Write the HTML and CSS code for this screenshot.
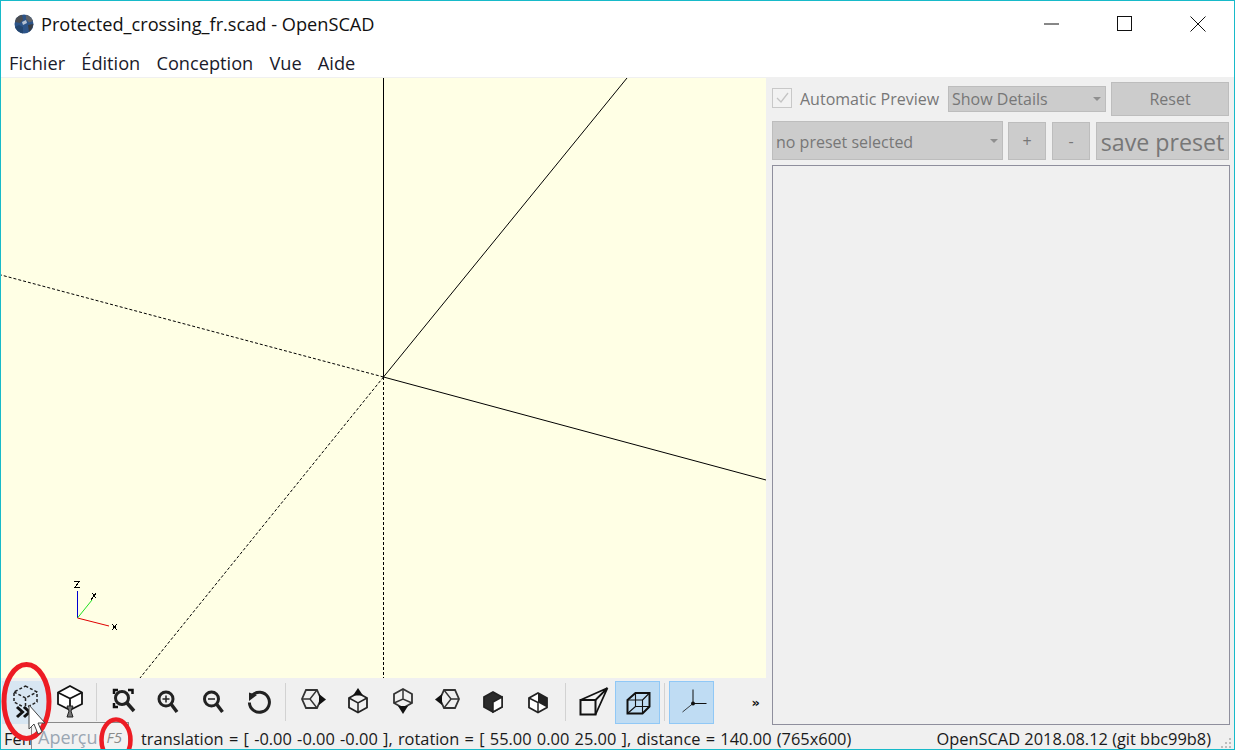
FILE: index.html
```html
<!DOCTYPE html>
<html lang="fr">
<head>
<meta charset="utf-8">
<title>Protected_crossing_fr.scad - OpenSCAD</title>
<link rel="stylesheet" href="styles.css">
</head>
<body>
<div class="window">
  <header class="titlebar">
    <svg class="app-icon" width="20" height="20" viewBox="0 0 20 20">
      <circle cx="10" cy="10" r="9.500" fill="#2d5488"/>
      <path d="M2 4.500 Q5 1 8 .8 L9 6 L6 9 L1 8Z" fill="#4a4d52"/>
      <path d="M12 .8 Q17 2 19 7 L15 8.500 L12 5Z" fill="#5e6268"/>
      <path d="M14 11 L19.500 10 Q18.500 15 15 18Z" fill="#3a3d42"/>
      <path d="M1 13 L5 11 L9 13 L9 19.500 Q3 18 1 13Z" fill="#24466f"/>
      <path d="M8 8 L12 6 L13 9 L9 11Z" fill="#b7c2d2"/>
    </svg>
    <span class="title-text">Protected_crossing_fr.scad - OpenSCAD</span>
    <div class="window-controls">
      <svg class="win-btn" width="16" height="16" viewBox="0 0 16 16"><path d="M0 8H15" stroke="#111" fill="none"/></svg>
      <svg class="win-btn" width="16" height="16" viewBox="0 0 16 16"><rect x="0.500" y="0.500" width="14" height="14" stroke="#111" fill="none"/></svg>
      <svg class="win-btn" width="16" height="16" viewBox="0 0 16 16"><path d="M0.500 0.500L15.500 15.500M15.500 0.500L0.500 15.500" stroke="#111" fill="none"/></svg>
    </div>
  </header>
  <nav class="menubar">
    <span class="menu-item">Fichier</span>
    <span class="menu-item">Édition</span>
    <span class="menu-item">Conception</span>
    <span class="menu-item">Vue</span>
    <span class="menu-item">Aide</span>
  </nav>
  <main class="workspace">
    <section class="left-pane">
      <svg class="viewport" width="765" height="600" viewBox="0 0 765 600">
        <g stroke="#000" stroke-width="1" fill="none">
          <path d="M382.500 0V299"/>
          <path d="M382.500 299L626 0"/>
          <path d="M382.500 299L765 402"/>
          <path d="M382.500 299V600" stroke-dasharray="3 2"/>
          <path d="M382.500 299L139 600" stroke-dasharray="3 2"/>
          <path d="M382.500 299L0 197" stroke-dasharray="3 2"/>
        </g>
        <path d="M76.500 540V513" stroke="#0000d0" fill="none"/>
        <path d="M76.500 540L91 522" stroke="#20e020" fill="none"/>
        <path d="M76.500 540L108 548" stroke="#e00000" fill="none"/>
        <g stroke="#000" fill="none" shape-rendering="crispEdges">
          <path d="M73 503.500H79M78 504L74 509M73 509.500H79"/>
          <path d="M91 515L95 520M95 515L90 522"/>
          <path d="M111 546L116 552M116 546L111 552"/>
        </g>
      </svg>
      <div class="toolbar">
        <button class="tool hover">
          <svg width="36" height="44" viewBox="0 0 36 44"><path d="M18.500 6L30 12V22L18.500 28L7 22V12Z" fill="none" stroke="#222" stroke-width="1.500" stroke-dasharray="3 2"/><path d="M7 12L18.500 18L30 12M18.500 18V28" fill="none" stroke="#222" stroke-width="1.500" stroke-dasharray="3 2"/><path d="M10 27L15.500 32L10 37M17 27L22.500 32L17 37" fill="none" stroke="#111" stroke-width="3"/></svg>
        </button>
        <button class="tool">
          <svg width="36" height="44" viewBox="0 0 36 44"><path d="M18 6L30 12.500V24L18 30L6 24V12.500Z" fill="#fff" stroke="#111" stroke-width="1.800"/><path d="M6 12.500L18 18.500L30 12.500M18 18.500V30" fill="none" stroke="#111" stroke-width="1.800"/><path d="M15 26H21L19 31L21 37H15L17 31Z" fill="#777" stroke="#222"/></svg>
        </button>
        <span class="sep sep-a"></span>
        <button class="tool wide">
          <svg width="36" height="44" viewBox="0 0 36 44"><path d="M9 14V10H13M23 10H27.500V14M9 23V27H13" fill="none" stroke="#111" stroke-width="2.500"/><circle cx="17" cy="18" r="6.500" fill="none" stroke="#222" stroke-width="3"/><path d="M22 23L29 31" stroke="#222" stroke-width="3.500"/></svg>
        </button>
        <button class="tool wide">
          <svg width="36" height="44" viewBox="0 0 36 44"><circle cx="16" cy="19" r="7" fill="none" stroke="#222" stroke-width="3"/><path d="M12.500 19H19.500M16 15.500V22.500" stroke="#222" stroke-width="1.500"/><path d="M21 24L27 32" stroke="#222" stroke-width="3.500"/></svg>
        </button>
        <button class="tool wide">
          <svg width="36" height="44" viewBox="0 0 36 44"><circle cx="16.500" cy="19" r="7" fill="none" stroke="#222" stroke-width="3"/><path d="M13 19H20" stroke="#222" stroke-width="1.500"/><path d="M21.500 24L27.500 32" stroke="#222" stroke-width="3.500"/></svg>
        </button>
        <button class="tool wide">
          <svg width="36" height="44" viewBox="0 0 36 44"><path d="M11 15.500A10 10 0 1 1 8.400 22.500" fill="none" stroke="#222" stroke-width="3"/><path d="M8 12.500L16 15L8 21Z" fill="#222"/></svg>
        </button>
        <span class="sep sep-b"></span>
        <button class="tool">
          <svg width="36" height="44" viewBox="0 0 36 44"><path d="M11 10H22L26 19L22 28H11L7 19Z" fill="none" stroke="#333" stroke-width="1.800"/><path d="M7 19H15L22 10M15 19L22 28" fill="none" stroke="#333" stroke-width="1.400"/><path d="M24 14L31 19.500L24 25Z" fill="#111"/></svg>
        </button>
        <button class="tool">
          <svg width="36" height="44" viewBox="0 0 36 44"><path d="M18 13L27 18V27.500L18 32.500L9 27.500V18Z" fill="none" stroke="#222" stroke-width="1.800"/><path d="M9 18L18 23L27 18M18 23V32.500" fill="none" stroke="#222" stroke-width="1.500"/><path d="M13 15.500L18 8L23 15.500Z" fill="#111"/></svg>
        </button>
        <button class="tool">
          <svg width="36" height="44" viewBox="0 0 36 44"><path d="M18 9L27 14V23L18 28L9 23V14Z" fill="none" stroke="#333" stroke-width="1.800"/><path d="M18 9V19M9 23L18 19L27 23" fill="none" stroke="#333" stroke-width="1.500"/><path d="M13 26L23 26L18 34Z" fill="#111"/></svg>
        </button>
        <button class="tool">
          <svg width="36" height="44" viewBox="0 0 36 44"><path d="M14 10H25L29 19L25 28H14L10 19Z" fill="none" stroke="#333" stroke-width="1.800"/><path d="M29 19H21L14 10M21 19L14 28" fill="none" stroke="#333" stroke-width="1.400"/><path d="M12 14L5 19.500L12 25Z" fill="#111"/></svg>
        </button>
        <button class="tool">
          <svg width="36" height="44" viewBox="0 0 36 44"><path d="M18 12L27 17V27L18 32L9 27V17Z" fill="#2b2b2b" stroke="#222" stroke-width="1.800"/><path d="M18 22L27 17V27L18 32Z" fill="#fff" stroke="#222" stroke-width="1.500"/></svg>
        </button>
        <button class="tool">
          <svg width="36" height="44" viewBox="0 0 36 44"><path d="M18 13L27 18V27.500L18 32.500L9 27.500V18Z" fill="#fff" stroke="#222" stroke-width="1.800"/><path d="M18 13L27 18V27.500L18 22.500Z" fill="#222"/><path d="M9 18L18 22.500V32.500" fill="none" stroke="#222" stroke-width="1.500"/></svg>
        </button>
        <span class="sep sep-a"></span>
        <button class="tool">
          <svg width="36" height="44" viewBox="0 0 36 44"><rect x="5.500" y="20" width="15" height="14.500" fill="none" stroke="#111" stroke-width="2"/><path d="M5.500 20L32.500 8L20.500 20M32.500 8L20.500 34.500" fill="none" stroke="#111" stroke-width="1.800"/></svg>
        </button>
        <button class="tool active">
          <svg width="36" height="44" viewBox="0 0 36 44"><path d="M7.500 20L15.500 13H29.500V26.500L22.500 33.500H7.500Z" fill="none" stroke="#111" stroke-width="2"/><path d="M7.500 20H22.500V33.500M22.500 20L29.500 13M15.500 13V26.500H29.500M7.500 33.500L15.500 26.500" fill="none" stroke="#111" stroke-width="1.100"/></svg>
        </button>
        <span class="sep sep-c"></span>
        <button class="tool active">
          <svg width="36" height="44" viewBox="0 0 36 44"><path d="M19 9.500V23.500H32.500" stroke="#111" fill="none"/><path d="M19 23.500L8.500 32" stroke="#111" stroke-width="0.800" fill="none"/><circle cx="19" cy="23.500" r="2" fill="#111"/></svg>
        </button>
        <span class="more">»</span>
      </div>
    </section>
    <aside class="customizer">
      <div class="row row-top">
        <span class="check">
          <svg width="18" height="18" viewBox="0 0 18 18"><path d="M4 9L8 13L15 4" fill="none" stroke="#c4c4c4" stroke-width="1.300"/></svg>
        </span>
        <span class="check-label">Automatic Preview</span>
        <span class="combo combo-details">Show Details<i class="caret"></i></span>
        <span class="btn btn-reset">Reset</span>
      </div>
      <div class="row row-preset">
        <span class="combo combo-preset">no preset selected<i class="caret"></i></span>
        <span class="btn btn-small">+</span>
        <span class="btn btn-small">-</span>
        <span class="btn btn-save">save preset</span>
      </div>
      <div class="param-box"></div>
    </aside>
  </main>
  <footer class="statusbar">
    <span class="status-left">Fen</span>
    <span class="status-view">translation = [ -0.00 -0.00 -0.00 ], rotation = [ 55.00 0.00 25.00 ], distance = 140.00 (765x600)</span>
    <span class="status-version">OpenSCAD 2018.08.12 (git bbc99b8)</span>
    <svg class="grip" width="12" height="12" viewBox="0 0 12 12"><path d="M9 1h2v2H9zM5 5h2v2H5zM9 5h2v2H9zM1 9h2v2H1zM5 9h2v2H5zM9 9h2v2H9z" fill="#bdbdbd"/></svg>
  </footer>
  <div class="tooltip"><span class="tip-name">Aperçu</span><span class="tip-key">F5</span></div>
  <svg class="annotations" width="1235" height="750" viewBox="0 0 1235 750">
    <ellipse cx="26.500" cy="701.500" rx="22.500" ry="37" fill="none" stroke="#ed1c24" stroke-width="5"/>
    <ellipse cx="116" cy="740" rx="14.500" ry="20.500" fill="none" stroke="#ed1c24" stroke-width="4.500"/>
    <path d="M29 705V729L34 724L38 734L42 732L38 723H45Z" fill="#fff" stroke="#444" stroke-width="1"/>
  </svg>
</div>
</body>
</html>
```
FILE: styles.css
```css
* { box-sizing: border-box; }
html, body { margin: 0; padding: 0; }
body { width: 1235px; height: 750px; overflow: hidden; font-family: "Open Sans", "Noto Sans", sans-serif; color: #111; }
.window { position: relative; width: 1235px; height: 750px; border: 1px solid #17bac9; display: flex; flex-direction: column; background: #f0f0f0; overflow: hidden; }
.titlebar { height: 47px; flex: none; background: #fff; display: flex; align-items: center; padding-left: 13px; padding-bottom: 2px; }
.app-icon { flex: none; }
.title-text { margin-left: 7px; font-size: 18.2px; color: #111; white-space: nowrap; }
.window-controls { margin-left: auto; display: flex; gap: 57px; padding-right: 28px; }
.win-btn { display: block; }
.menubar { height: 30px; flex: none; background: #fff; border-bottom: 1px solid #f0f0f0; display: flex; align-items: center; gap: 16.2px; padding-left: 8px; font-size: 18.2px; color: #1a1a2a; }
.workspace { flex: 1; display: flex; min-height: 0; }
.left-pane { width: 765px; flex: none; display: flex; flex-direction: column; }
.viewport { display: block; flex: none; background: #ffffe5; }
.toolbar { flex: 1; display: flex; align-items: center; padding-left: 1px; padding-bottom: 1px; background: #f0f0f0; }
.tool { width: 45px; height: 43px; flex: none; padding: 0; margin: 0; background: none; border: 1px solid transparent; display: flex; align-items: center; justify-content: center; }
.tool svg { display: block; flex: none; }
.tool.wide { width: 45.3px; }
.tool.hover { background: #d8e6f2; border-color: #d8e6f2; }
.tool.active { background: #bfdcf3; border-color: #90c8f6; }
.sep { flex: none; height: 38px; display: flex; justify-content: center; }
.sep::before { content: ""; width: 1px; background: #d2d2d2; }
.sep-a { width: 10px; }
.sep-a:first-of-type { width: 8px; }
.sep-b { width: 9px; }
.sep-c { width: 9px; }
.more { margin-left: auto; margin-right: 6px; font-size: 13px; font-weight: 700; font-family: "DejaVu Sans", sans-serif; }
.customizer { flex: 1; min-width: 0; display: flex; flex-direction: column; padding: 4px 5px 2px 6px; color: #777; }
.row { display: flex; flex: none; }
.row-top { height: 34px; align-items: center; }
.check { width: 20px; height: 20px; margin-top: -2px; background: #f2f2f2; border: 1px solid #c8c8c8; display: flex; align-items: center; justify-content: center; flex: none; }
.check-label { margin-left: 8px; width: 148px; font-size: 16px; white-space: nowrap; }
.combo { position: relative; background: #cccccc; border: 1px solid #bdbdbd; font-size: 16px; display: flex; align-items: center; padding-left: 3px; white-space: nowrap; flex: none; }
.caret { position: absolute; right: 4px; top: 50%; margin-top: -2px; width: 0; height: 0; border: 4px solid transparent; border-top: 4px solid #8f8f8f; }
.combo-details { width: 158px; height: 26px; }
.btn { background: #cccccc; border: 1px solid #bdbdbd; display: flex; align-items: center; justify-content: center; flex: none; white-space: nowrap; }
.btn-reset { width: 118px; height: 34px; margin-left: 5px; font-size: 16px; }
.row-preset { margin-top: 5px; height: 39px; align-items: flex-end; }
.combo-preset { width: 231px; height: 39px; padding-top: 2px; }
.btn-small { width: 38px; height: 38px; font-size: 16px; margin-left: 6px; }
.combo-preset + .btn-small { margin-left: 5px; }
.btn-save { width: 133px; height: 38px; margin-left: 6px; padding-top: 2px; font-size: 23.2px; }
.param-box { flex: 1; margin-top: 5px; margin-right: -1px; background: #f0f0f0; border: 1px solid #8f8f9d; }
.statusbar { height: 22px; flex: none; position: relative; display: flex; align-items: flex-start; overflow: hidden; padding-left: 3px; font-size: 16.4px; line-height: 24px; color: #1a1a1a; white-space: nowrap; }
.status-left { width: 137px; flex: none; }
.status-view { word-spacing: 1px; }
.status-version { margin-left: auto; margin-right: 23px; }
.grip { position: absolute; right: 2px; bottom: 0; }
.tooltip { position: absolute; left: 30px; top: 721px; width: 98px; height: 28px; background: #f2f2f2; border: 1px solid #8a8a8a; border-bottom: none; display: flex; align-items: center; padding-left: 6px; }
.tip-name { font-size: 18px; color: #9aa6b2; }
.tip-key { margin-left: auto; margin-right: 6px; font-size: 15px; font-style: italic; color: #8a8a8a; }
.annotations { position: absolute; left: -1px; top: -1px; pointer-events: none; }
```
